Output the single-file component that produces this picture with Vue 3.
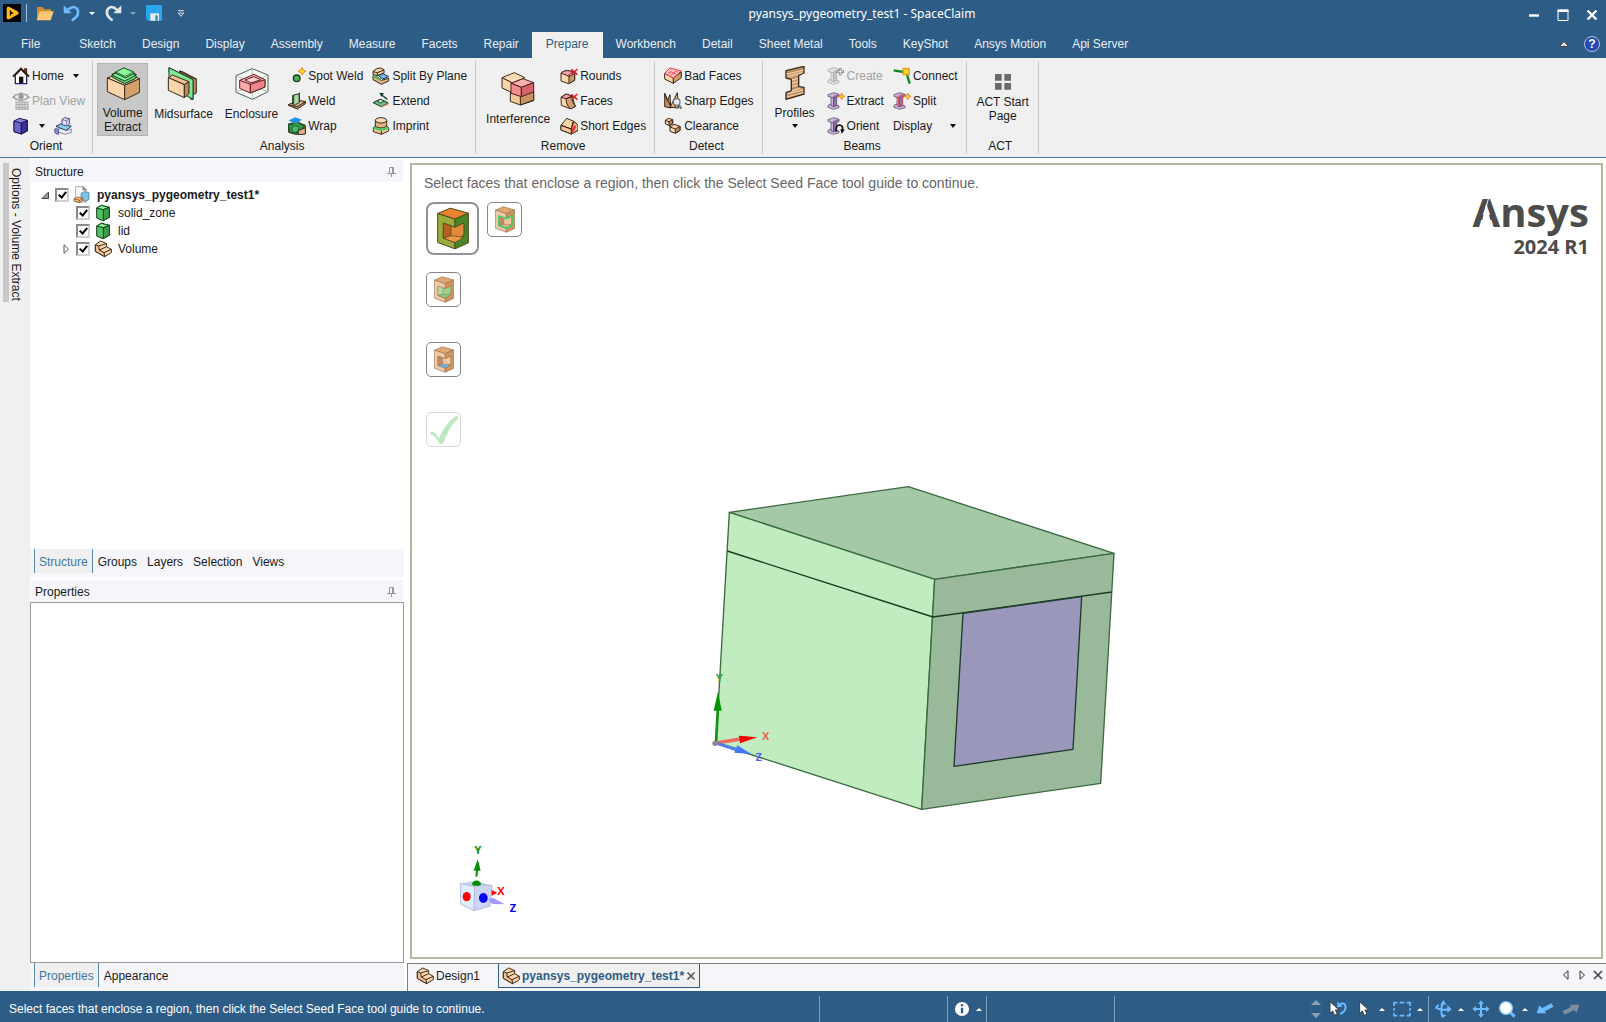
<template>
  <div class="app">
    <header class="title-bar">
      <div class="quick-access">
        <svg class="logo" viewBox="0 0 54 54" v-html="icons.logo"></svg>
        <span class="quick-sep"></span>
        <button v-for="q in quickItems" :key="q.name" class="quick-btn" :aria-label="q.name">
          <svg viewBox="0 0 54 54" v-html="icons[q.icon]"></svg>
          <i v-if="q.caret" class="caret" :class="q.caret"></i>
        </button>
      </div>
      <h1 class="title">pyansys_pygeometry_test1 - SpaceClaim</h1>
      <div class="window-btns">
        <button aria-label="Minimize"><svg viewBox="0 0 12 12"><path d="M1 6.5h10" stroke="#fff" stroke-width="2.4" /></svg></button>
        <button aria-label="Maximize"><svg viewBox="0 0 12 12"><path d="M1 11.5V1h10v10.5z" fill="none" stroke="#fff" /><path d="M.5 1.8h11" stroke="#fff" stroke-width="2.4" /></svg></button>
        <button aria-label="Close"><svg viewBox="0 0 12 12"><path d="M1.5 1.5l9 9M10.5 1.5l-9 9" stroke="#fff" stroke-width="2.4" /></svg></button>
      </div>
    </header>

    <nav class="menu">
      <button class="file-btn">File</button>
      <button
        v-for="tab in tabs"
        :key="tab"
        class="menu-tab"
        :class="{ active: tab === activeTab }"
        @click="activeTab = tab"
      >{{ tab }}</button>
      <div class="menu-end">
        <button aria-label="Collapse ribbon"><svg viewBox="0 0 12 12"><path d="M1.5 8.5L6 3.5l4.5 5z" fill="#eee" stroke="#444" /><path d="M5 8.5l1-1.5 1 1.5z" fill="#444" /></svg></button>
        <button class="help" aria-label="Help">?</button>
      </div>
    </nav>

    <section class="ribbon">
      <div class="group orient">
        <div class="group-body">
          <div class="column">
            <button class="small-btn"><svg viewBox="0 0 54 54" v-html="icons.home"></svg>Home<i class="caret dark wide"></i></button>
            <button class="small-btn" disabled><svg viewBox="0 0 54 54" v-html="icons.planView"></svg>Plan View</button>
            <div class="split-row">
              <button class="small-btn" aria-label="View"><svg viewBox="0 0 54 54" v-html="icons.viewCube"></svg><i class="caret dark wide"></i></button>
              <button class="small-btn" aria-label="Snap view"><svg viewBox="0 0 54 54" v-html="icons.snapView"></svg></button>
            </div>
          </div>
        </div>
        <div class="group-label">Orient</div>
      </div>

      <div v-for="group in groups" :key="group.name" class="group">
        <div class="group-body">
          <button
            v-for="b in group.big"
            :key="b.label"
            class="big-btn"
            :class="[b.cls, { pressed: b.pressed }]"
          >
            <svg viewBox="0 0 102 102" v-html="icons[b.icon]"></svg>
            <span class="big-label">{{ b.label }}</span>
            <i v-if="b.caret" class="caret dark"></i>
          </button>
          <div v-for="(col, i) in group.columns" :key="i" class="column">
            <button v-for="s in col" :key="s.label" class="small-btn" :disabled="s.disabled">
              <svg v-if="s.icon" viewBox="0 0 54 54" v-html="icons[s.icon]"></svg>{{ s.label }}
              <i v-if="s.caret" class="caret dark end"></i>
            </button>
          </div>
        </div>
        <div class="group-label">{{ group.name }}</div>
      </div>
    </section>

    <main class="workspace">
      <aside class="dock">
        <button class="dock-tab">Options - Volume Extract</button>
      </aside>

      <div class="panels">
        <section class="panel">
          <div class="panel-head">Structure<svg class="pin" viewBox="0 0 9 10" v-html="icons.pin"></svg></div>
          <ul class="tree">
            <li v-for="node in nodes" :key="node.name" class="node" :class="{ root: node.root }">
              <svg class="twisty" viewBox="0 0 9 10">
                <path v-if="node.root" d="M1 8.5L7.5 2v6.5z" fill="#999" stroke="#444" />
                <path v-else-if="node.closed" d="M2 .8L6.5 5 2 9.2z" fill="#fff" stroke="#555" />
              </svg>
              <label>
                <input v-model="node.checked" type="checkbox">
                <svg class="node-icon" viewBox="0 0 54 54" v-html="icons[node.icon]"></svg>
                <span>{{ node.name }}</span>
              </label>
            </li>
          </ul>
          <div class="panel-tabs">
            <button
              v-for="t in structureTabs"
              :key="t"
              :class="{ active: t === structureTab }"
              @click="structureTab = t"
            >{{ t }}</button>
          </div>
        </section>
        <section class="panel">
          <div class="panel-head">Properties<svg class="pin" viewBox="0 0 9 10" v-html="icons.pin"></svg></div>
          <div class="props-box"></div>
          <div class="panel-tabs">
            <button
              v-for="t in propertyTabs"
              :key="t"
              :class="{ active: t === propertyTab }"
              @click="propertyTab = t"
            >{{ t }}</button>
          </div>
        </section>
      </div>

      <div class="documents">
        <div class="viewport">
          <p class="hint">{{ message }}</p>
          <div class="guides">
            <div class="guide-row">
              <button class="guide large" aria-label="Select Faces"><svg viewBox="0 0 96 128" v-html="guideIcons.faces"></svg></button>
              <button class="guide" aria-label="Select Edges"><svg viewBox="0 0 96 128" v-html="guideIcons.edges"></svg></button>
            </div>
            <div class="guide-row"><button class="guide" aria-label="Select Seed Face"><svg viewBox="0 0 96 128" v-html="guideIcons.seed"></svg></button></div>
            <div class="guide-row"><button class="guide" aria-label="Select Cap Face"><svg viewBox="0 0 96 128" v-html="guideIcons.cap"></svg></button></div>
            <div class="guide-row">
              <button class="guide complete" aria-label="Complete" disabled>
                <svg viewBox="0 0 84 84">
                  <path d="M0 50Q8 46 14 50Q22 58 27 67Q44 22 78 0Q86 0 84 8Q56 34 40 80Q32 88 27 81Q18 60 0 54z" fill="#bde8c0" />
                </svg>
              </button>
            </div>
          </div>

          <svg class="brand" viewBox="0 0 130 80">
            <text x="130" y="42" text-anchor="end" class="brand-name">Ansys</text>
            <path d="M27 21l-6 22h13z" fill="#fff" />
            <path d="M30 12l-3 10" stroke="#fff" />
            <text x="130" y="69" text-anchor="end" class="brand-release">2024 R1</text>
          </svg>

          <svg class="model" viewBox="0 0 1320 1050">
            <g stroke="#3a6b40" stroke-width="4" stroke-linejoin="round">
              <polygon points="118,127 655,50 1272,250 734,328" fill="#a5c9a6" />
              <polygon points="118,127 734,328 695,1018 78,820" fill="#c0ecc0" />
              <polygon points="734,328 1272,250 1232,940 695,1018" fill="#9ab99a" />
              <path d="M112 243L729 441L1265 366" fill="none" stroke="#163d1c" />
              <polygon points="819,430 1175,380 1149,838 792,889" fill="#9998ba" stroke="#1f3a2c" />
            </g>
            <path d="M78 819L84 710" stroke="#149014" stroke-width="8" />
            <path d="M71 722L84 665L95 722z" fill="#009400" />
            <path d="M78 819L152 807" stroke="#f0685e" stroke-width="10" />
            <path d="M147 797L202 802L150 820z" fill="#f20000" />
            <path d="M78 819L140 839" stroke="#5580e0" stroke-width="10" />
            <path d="M142 826L184 852L133 848z" fill="#4477ff" />
            <circle cx="75" cy="820" r="8" fill="#888" />
            <text x="88" y="636" fill="#35a035">Y</text>
            <text x="227" y="810" fill="#f0655c">X</text>
            <text x="206" y="873" fill="#5560f5">Z</text>
          </svg>

          <svg class="compass" viewBox="0 -30 180 240">
            <path d="M2 118L44 110L96 124L54 130z" fill="#c9d3ee" />
            <path d="M2 118L54 130L42 200L2 180z" fill="#dfeefb" stroke="#b3b9dc" stroke-width="3" />
            <path d="M44 122L96 124L90 186L42 200z" fill="#ccd6f2" stroke="#b3b9dc" stroke-width="3" />
            <path d="M36 122a13 12 0 0 1 27 0q-13 8-27 0z" fill="#008f00" />
            <path d="M49 98L52 76" stroke="#008f00" stroke-width="6" />
            <path d="M41 80L53 46L62 80z" fill="#008f00" />
            <ellipse cx="20" cy="158" rx="12" ry="14" fill="#f00" />
            <ellipse cx="70" cy="162" rx="13" ry="15" fill="#00f" />
            <path d="M95 138L112 146L95 155z" fill="#f00" />
            <path d="M88 164L100 162L134 181L98 180L88 174z" fill="#a09cff" />
            <text x="54" y="31" fill="#008f00">Y</text>
            <text x="123" y="154" fill="#f00">X</text>
            <text x="159" y="203" fill="#00f">Z</text>
          </svg>
        </div>

        <div class="doc-tabs">
          <button class="doc-tab"><svg viewBox="0 0 54 54" v-html="icons.component"></svg>Design1</button>
          <div class="doc-tab active">
            <button><svg viewBox="0 0 54 54" v-html="icons.component"></svg>pyansys_pygeometry_test1*</button>
            <button class="close" aria-label="Close document"><svg viewBox="0 0 10 10"><path d="M1.5 1.5l7 7M8.5 1.5l-7 7" stroke="#555" stroke-width="1.6" /></svg></button>
          </div>
          <div class="doc-nav">
            <button aria-label="Previous"><svg viewBox="0 0 10 10"><path d="M7 .8L2.5 5 7 9.2z" fill="none" stroke="#333" /></svg></button>
            <button aria-label="Next"><svg viewBox="0 0 10 10"><path d="M3 .8L7.5 5 3 9.2z" fill="none" stroke="#333" /></svg></button>
            <button aria-label="Close"><svg viewBox="0 0 10 10"><path d="M1 1l8 8M9 1L1 9" stroke="#444" stroke-width="1.6" /></svg></button>
          </div>
        </div>
      </div>
    </main>

    <footer class="status-bar">
      <span class="status-msg">{{ message }}</span>
      <span class="cell medium"></span>
      <span class="cell info">
        <button aria-label="Messages"><svg viewBox="0 0 54 54"><circle cx="27" cy="27" r="21" fill="#fff" /><path d="M27 23v17M27 13v6" stroke="#2d5c86" stroke-width="7" /></svg></button>
        <i class="caret up"></i>
      </span>
      <span class="cell medium"></span>
      <span class="cell tools">
        <span class="spinner"><i class="caret up faded"></i><i class="caret faded down"></i></span>
        <button v-for="t in selectTools" :key="t.name" :aria-label="t.name">
          <svg viewBox="0 0 54 54" v-html="icons[t.icon]"></svg><i v-if="t.caret" class="caret up"></i>
        </button>
      </span>
      <span class="cell tools view">
        <button v-for="t in viewTools" :key="t.name" :aria-label="t.name">
          <svg viewBox="0 0 54 54" v-html="icons[t.icon]"></svg><i v-if="t.caret" class="caret up"></i>
        </button>
      </span>
    </footer>
  </div>
</template>

<script setup>
import { ref } from 'vue'

const message = 'Select faces that enclose a region, then click the Select Seed Face tool guide to continue.'

const tabs = [
  'Sketch', 'Design', 'Display', 'Assembly', 'Measure', 'Facets', 'Repair', 'Prepare',
  'Workbench', 'Detail', 'Sheet Metal', 'Tools', 'KeyShot', 'Ansys Motion', 'Api Server'
]
const activeTab = ref('Prepare')

const structureTabs = ['Structure', 'Groups', 'Layers', 'Selection', 'Views']
const structureTab = ref('Structure')
const propertyTabs = ['Properties', 'Appearance']
const propertyTab = ref('Properties')

const quickItems = [
  { name: 'Open', icon: 'open' },
  { name: 'Undo', icon: 'undo', caret: 'light' },
  { name: 'Redo', icon: 'redo', caret: 'faded' },
  { name: 'Save', icon: 'save' },
  { name: 'Customize', icon: 'customize' }
]

const groups = [
  {
    name: 'Analysis',
    big: [
      { label: 'Volume Extract', icon: 'volume', pressed: true, cls: 'two-line' },
      { label: 'Midsurface', icon: 'midsurface' },
      { label: 'Enclosure', icon: 'enclosure' }
    ],
    columns: [
      [
        { label: 'Spot Weld', icon: 'spotWeld' },
        { label: 'Weld', icon: 'weld' },
        { label: 'Wrap', icon: 'wrap' }
      ],
      [
        { label: 'Split By Plane', icon: 'splitPlane' },
        { label: 'Extend', icon: 'extend' },
        { label: 'Imprint', icon: 'imprint' }
      ]
    ]
  },
  {
    name: 'Remove',
    big: [{ label: 'Interference', icon: 'interference', cls: 'low' }],
    columns: [[
      { label: 'Rounds', icon: 'rounds' },
      { label: 'Faces', icon: 'faces' },
      { label: 'Short Edges', icon: 'shortEdges' }
    ]]
  },
  {
    name: 'Detect',
    columns: [[
      { label: 'Bad Faces', icon: 'badFaces' },
      { label: 'Sharp Edges', icon: 'sharpEdges' },
      { label: 'Clearance', icon: 'clearance' }
    ]]
  },
  {
    name: 'Beams',
    big: [{ label: 'Profiles', icon: 'profiles', caret: true, cls: 'roomy' }],
    columns: [
      [
        { label: 'Create', icon: 'beamCreate', disabled: true },
        { label: 'Extract', icon: 'beamExtract' },
        { label: 'Orient', icon: 'beamOrient' }
      ],
      [
        { label: 'Connect', icon: 'connect' },
        { label: 'Split', icon: 'beamSplit' },
        { label: 'Display', caret: true }
      ]
    ]
  },
  { name: 'ACT', big: [{ label: 'ACT Start Page', icon: 'act', cls: 'act' }] }
]

const nodes = ref([
  { name: 'pyansys_pygeometry_test1*', icon: 'design', checked: true, root: true },
  { name: 'solid_zone', icon: 'solid', checked: true },
  { name: 'lid', icon: 'solid', checked: true },
  { name: 'Volume', icon: 'component', checked: true, closed: true }
])

const selectTools = [
  { name: 'Revert selection', icon: 'revert' },
  { name: 'Select', icon: 'cursor', caret: true },
  { name: 'Box select', icon: 'boxSelect', caret: true }
]
const viewTools = [
  { name: 'Spin', icon: 'spin', caret: true },
  { name: 'Pan', icon: 'pan' },
  { name: 'Zoom', icon: 'zoom', caret: true },
  { name: 'Previous view', icon: 'prevView' },
  { name: 'Next view', icon: 'nextView' }
]

const shape = (d, fill, stroke = '#3a2a1c', width = 3) =>
  `<path d="${d}" fill="${fill}" stroke="${stroke}" stroke-width="${width}" stroke-linejoin="round"/>`
const line = (d, stroke, width = 3) =>
  `<path d="${d}" fill="none" stroke="${stroke}" stroke-width="${width}"/>`

const redX = line('M34 7L52 23M52 6L34 24', '#e8202c', 5)
const star = shape('M44 3L47 10L53 13L47 16L44 23L41 16L34 13L41 10z', '#ffd21a', '#f08020', 3)

const beam = (light, dark, edge) =>
  shape('M3 40L14 35L36 42V47L20 52L3 46z', light, edge, 2) +
  shape('M12 14L20 17V44L12 41z', light, edge, 2) + shape('M20 17L29 14V41L20 44z', dark, edge, 2) +
  shape('M3 8L20 2L36 7V13L20 18L3 13z', light, edge, 2) + shape('M20 13L36 7V13L20 18z', dark, edge, 1)

const pointer = (x) =>
  `<path d="M${x} 5v35l8-7 6 13 8-4-6-12h11z" fill="#fff" stroke="#3d3d3d" stroke-width="3"/>`

const arrow = (color) =>
  `<path d="M2 40L10 16L18 24L46 10L53 20L26 34L32 40z" fill="${color}"/>`

const icons = {
  logo: '<path d="M0 0h54v54H0z" fill="#000"/><path d="M16 13L42 27L16 41z" fill="none" stroke="#ffb71b" stroke-width="10" stroke-linejoin="round"/><path d="M22 19v16" stroke="#000" stroke-width="3"/>',
  open: '<path d="M3 48V9h17l5 7h20v32z" fill="#d58a2a"/><path d="M2 49L11 22h42l-9 27z" fill="#fcc679"/>',
  undo: '<path d="M14 18Q34 0 44 18Q50 36 26 49" fill="none" stroke="#6cbaff" stroke-width="8"/><path d="M2 4v24h24z" fill="#6cbaff"/>',
  redo: '<path d="M40 18Q20 0 10 18Q4 36 26 49" fill="none" stroke="#e4e4e4" stroke-width="8"/><path d="M52 4v24H28z" fill="#e4e4e4"/>',
  save: '<path d="M3 3h48v47H9L3 44z" fill="#2aa6ea"/><path d="M16 28h26v22H16z" fill="#e9eef2"/><path d="M31 34h7v16h-7z" fill="#2a86c0"/>',
  customize: '<path d="M18 20h18" stroke="#ddd" stroke-width="3"/><path d="M19 27h16L27 37z" fill="#2d5c86" stroke="#ddd" stroke-width="3"/>',
  home: shape('M10 24V50H44V24L27 7z', '#fff', '#2a2470', 4) + shape('M38 5h6v14l-6-5z', '#8a4a1c', '#4a1c14') +
    line('M3 29L27 5L51 29', '#2f2208', 6) + '<path d="M21 29h13v19H21z" fill="#111"/>',
  planView: line('M3 16Q27 -6 51 16Q27 34 3 16z', '#999', 4) + '<circle cx="27" cy="14" r="8" fill="#999"/>' +
    line('M6 6L12 11M27 0V4M48 6L42 11M9 24L14 20M27 29V24', '#aaa', 3) +
    '<path d="M11 29h38v24H11z" fill="#ddd"/>' + line('M11 30H49M11 38H49M11 46H49M11 52H49M12 29V53M21 29V53M30 29V53M39 29V53M48 29V53', '#999', 2),
  viewCube: shape('M6 12L22 4L46 10L46 42L28 51L6 44z', '#8c84e8', '#1b1850') + shape('M6 12L28 18V51L6 44z', '#6d64cc', '#1b1850') + shape('M28 18L46 10V42L28 51z', '#39329a', '#1b1850'),
  snapView: shape('M4 40L16 46L34 52L52 46V36L40 40L20 34z', '#e9eef4', '#5a5a78', 2) + shape('M2 36Q8 30 14 38V52Q4 52 2 46z', '#8c8ad0', '#3c3a78', 2) +
    shape('M6 28L22 20L52 28L36 40z', '#8fd0ea', '#1f3f5c') + shape('M24 8L32 2L46 5V22L40 27L24 23z', '#e6e2ff', '#4a4690') + line('M24 8L38 11L46 5M38 11V26', '#4a4690', 2),
  volume: shape('M4 33L52 16L101 35L56 55z', '#fcd5aa') + shape('M4 33L56 55V98L4 74z', '#fcd5aa') + shape('M56 55L101 35V76L56 98z', '#d3a06c') +
    shape('M18 30L18 22L53 4L90 22V30L88 35L56 50z', '#5fcf74', '#173f1d') + shape('M18 24L53 6L90 24L56 42z', '#8cf79c', '#173f1d') + shape('M29 19V15L53 3L83 15V20L58 33z', '#6edf80', '#173f1d') + shape('M29 15L53 3L83 15L58 28z', '#8cf79c', '#173f1d', 2),
  midsurface: shape('M40 12L88 36V78L75 84L40 60z', '#b88d60') + shape('M36 12L76 32L88 36L48 15z', '#d6aa7c') +
    shape('M6 2L78 38V98L70 96V46L6 16z', '#7ee898', '#174522') + shape('M6 2L78 38V96L6 60z', '#7ee898', '#174522') +
    shape('M4 32L16 24L66 44L52 53z', '#e8bf90') + shape('M4 32L52 53V92L4 70z', '#fcd5aa') + shape('M52 53L66 44V80L52 92z', '#b98a5c'),
  enclosure: shape('M3 26L52 5L99 24V74L53 97L3 76z', '#f6f8f6', '#4d6650') + line('M3 26L53 46L99 24M53 46V97M3 76L52 58L99 74M52 5V30', '#93aa96', 2) +
    shape('M14 40L57 22L90 38V60L46 78L14 64z', '#ffaaac', '#5b2326') + shape('M46 52L90 38V60L46 78z', '#ee868c', '#5b2326') + shape('M30 39L56 29L78 38L48 48z', '#ffd0d0', '#5b2326') + line('M14 40L46 52V78', '#5b2326'),
  spotWeld: '<circle cx="26" cy="34" r="10" fill="#4faa59" stroke="#183d1c" stroke-width="4"/>' + shape('M42 2L46 9L53 13L46 17L42 24L38 17L31 13L38 9z', '#ffdf26', '#f07b20', 3),
  weld: shape('M1 40L14 33L52 28V35L28 51z', '#ad825a') + shape('M1 38L28 44L52 29L33 25z', '#dfb28a') + shape('M14 10L34 5V31L20 40L14 36z', '#a9d6a4', '#223a20') + line('M34 2V30M17 10V38', '#3a2a1c', 3),
  wrap: shape('M2 22L24 14L52 25V50L22 52L2 46z', '#a8744a') + shape('M2 20Q20 26 20 14L32 14Q34 26 50 24L40 42Q22 54 4 44z', '#2f9c48', '#0d4c1d') +
    '<circle cx="22" cy="36" r="10" fill="#50b867" stroke="#0d4c1d" stroke-width="2"/><path d="M2 10L22 1L42 8L30 16L16 19z" fill="#2293e6"/>' + shape('M30 42L52 32V51L32 53z', '#e1b48b'),
  splitPlane: shape('M3 13L14 5L26 3L36 8V18L16 26L3 22z', '#f8cfa2') + shape('M3 26L16 31L28 40L50 34V42L28 52L3 38z', '#e1b384') + line('M2 26L26 38', '#36b455', 6) +
    shape('M18 25L34 20L50 29L32 36z', '#7eb4e6', '#1c3858') + line('M3 14L16 17L36 9M16 17V26', '#3a2a1c', 3),
  extend: line('M46 22L28 8', '#163d22', 4) + '<path d="M22 2L36 4L28 15z" fill="#163d22"/>' + shape('M3 32L24 22L48 32L28 44z', '#6fc087', '#173f24') + shape('M16 27L25 22L37 27L26 33z', '#d9f1dc', '#173f24') + line('M28 44L50 34', '#a98058', 5),
  imprint: shape('M4 32L14 24H42L50 32V42L28 52L4 44z', '#f0c698') + shape('M10 10V28Q26 38 44 28V10z', '#e0b284') + '<ellipse cx="27" cy="10" rx="17" ry="8" fill="#ffdbb4" stroke="#3a2a1c" stroke-width="3"/>' +
    line('M5 31Q27 46 49 31', '#3bd060', 6) + line('M28 42V52', '#3a2a1c'),
  interference: shape('M3 17L40 2L72 17L34 33z', '#fcdcb4') + shape('M3 17L34 33V62L3 48z', '#fcd5aa') + shape('M28 62L60 50L98 62V86L58 99L28 88z', '#f4c898') + shape('M58 74L98 58V84L58 99z', '#c99464') +
    shape('M30 34L66 20L98 32L61 46z', '#f7b0ae', '#4c1f20') + shape('M30 34L61 46V74L30 64z', '#f58c90', '#4c1f20') + shape('M61 46L98 32V60L61 74z', '#d5636c', '#4c1f20'),
  rounds: shape('M3 18L20 10L44 16V40L26 50L3 42z', '#fcd5aa') + shape('M3 18Q14 8 32 12L44 16Q28 16 27 28z', '#f6a2a8', '#4c2020') + shape('M27 28L44 20V40L27 50z', '#c79a6c') + redX,
  faces: shape('M3 16L18 6L36 12L46 44L30 50L4 40z', '#fcd5aa') + shape('M18 20L36 14Q36 34 47 42L32 51Q18 40 18 20z', '#d1a071') + shape('M3 16L18 6L36 12L18 20z', '#f6a2a8', '#4c2020') + redX,
  shortEdges: shape('M3 25L20 4L42 13L54 25V40L34 51L3 39z', '#fcd5aa') + shape('M3 25L34 36V51L3 39z', '#f4c898') + shape('M34 36L42 13L54 25V40L34 51z', '#eeb58c') + line('M3 25L34 36L38 15', '#3a2a1c') + line('M36 44L46 26', '#f01a24', 6),
  badFaces: shape('M2 19L28 33V49L2 36z', '#fcd5aa') + shape('M28 33L52 15V32L28 49z', '#d3a06c') + shape('M2 19L18 3L52 12L28 33z', '#ffc7c4', '#ee3340') + line('M12 19Q22 10 28 18Q34 12 40 14M20 25Q26 18 34 20', '#ee4350', 3),
  sharpEdges: shape('M2 4L10 26L18 8L20 48L2 44z', '#be8d60') + shape('M18 46L40 2L44 48z', '#d9aa7c') + line('M30 22L34 46M2 4L22 48', '#3a2a1c') + '<circle cx="38" cy="30" r="10" fill="#dcecf8" stroke="#777" stroke-width="4"/>' + line('M45 38L52 50', '#777', 6),
  clearance: shape('M4 10L14 4L26 8V20L15 26L4 20z', '#fcd5aa') + shape('M15 14L26 8V20L15 26z', '#b98a5c') + line('M4 10L15 14', '#3a2a1c') +
    shape('M18 30L30 22L48 28V40L34 49L18 43z', '#fcd5aa') + shape('M34 36L48 28V40L34 49z', '#b98a5c') + line('M18 30L34 36', '#3a2a1c') + line('M16 30L20 26', '#555', 4),
  profiles: shape('M24 14L78 1V21L62 28V62L78 64V84L24 100V80L40 74V40L24 36z', '#cf9e70', '#3a2a1c', 4) +
    line('M26 24L76 12M28 32L74 20M42 42L60 37M42 52L60 47M42 62L60 57M40 76L66 66M28 84L76 72M28 92L76 80', '#f6d6b4', 3) + line('M28 20L76 8M44 36L60 32M42 68L60 63M30 88L76 76', '#9a6d44', 2),
  beamCreate: beam('#e2e2e2', '#c8c8c8', '#a0a0a0') + line('M40 3V25M29 14H51', '#8a8a8a', 8) + line('M40 6V22M32 14H48', '#e6e6e6', 3),
  beamExtract: beam('#cdb4dc', '#9678aa', '#4a3656') + star,
  beamOrient: beam('#cdb4dc', '#9678aa', '#4a3656') + line('M28 44Q24 24 38 24Q50 26 46 42', '#111', 5) + '<path d="M40 36L53 38L44 50z" fill="#111"/>',
  beamSplit: beam('#cdb4dc', '#9678aa', '#4a3656') + line('M17 12L27 8V36L17 42z', '#f0505a', 3) + star,
  connect: line('M2 10L32 15', '#0e8a22', 7) + line('M42 22L50 50', '#0e8a22', 7) + '<path d="M31 5h17v17H31z" fill="#ffe22a" stroke="#f2a01c" stroke-width="5"/>',
  act: '<path d="M27 27h20v20H27zM55 27h20v20H55zM27 54h20v20H27zM55 54h20v20H55z" fill="#6a6a6a"/>',
  pin: '<path d="M2.5 6V.5h4V6M0 6.500h9M4.5 6.500V10M5.500 1v5" fill="none" stroke="#999"/>',
  solid: shape('M8 12L22 4L46 10V40L26 50L8 42z', '#52c062', '#14401b') + shape('M8 12L22 4L46 10L28 17z', '#8ae897', '#14401b') + shape('M28 17L46 10V40L28 50z', '#3a9c4a', '#14401b'),
  component: shape('M4 14L20 3L38 11V20L52 28V38L32 50L4 34z', '#fcd5aa') + shape('M4 14L14 18L16 30L30 38L32 50L4 34z', '#f1bf92') +
    line('M14 18L38 11M16 30L38 20M30 38L52 28', '#3a2a1c', 3),
  design: shape('M8 2H30L40 12V48H8z', '#fff', '#808890', 2) + shape('M30 2V12H40z', '#ddd', '#333', 2) + shape('M24 22L34 17L48 20V40L38 46L24 40z', '#7fc4e4', '#2b6c90', 2) + shape('M3 38L14 33L30 37V43L20 50L3 45z', '#f4bd8a', '#6b3c18', 2) + line('M3 38L20 43L30 37M20 43V50', '#6b3c18', 2),
  cursor: pointer(14),
  revert: pointer(3) + '<path d="M32 14Q48 4 50 22Q50 34 34 42" fill="none" stroke="#6cbaff" stroke-width="6"/><path d="M25 4v18l16-2z" fill="#6cbaff"/>',
  boxSelect: '<path d="M3 18V8h10M20 8h14M41 8h10v10M51 24v8M51 38v9H41M34 47H20M13 47H3V38M3 32v-8" fill="none" stroke="#6cbaff" stroke-width="5"/>',
  spin: line('M4 22Q24 34 46 27M27 8Q18 28 25 50', '#6cbaff', 6) + line('M6 22L14 15', '#6cbaff', 5) + '<path d="M18 14L29 0L37 14zM22 42L24 54L38 46zM40 15L53 28L40 38z" fill="#6cbaff"/>',
  pan: line('M27 6V48M6 27H48', '#6cbaff', 6) + '<path d="M27 1L36 12H18zM27 53L36 42H18zM1 27L12 18V36zM53 27L42 18V36z" fill="#6cbaff"/>',
  zoom: line('M34 34L50 50', '#6cbaff', 9) + '<circle cx="24" cy="24" r="19" fill="#fff" stroke="#8cc8ff" stroke-width="4"/>',
  prevView: arrow('#6cbaff'),
  nextView: `<g transform="rotate(180 27 27)">${arrow('#7d8f9d')}</g>`
}

// block with a notched pocket, shared by all tool guides
const guide = (c, extra = '') =>
  shape('M2 19L40 3L94 18L54 36z', c.top, c.edge) +
  shape('M2 19L54 36V125L2 106z', c.left, c.edge) +
  shape('M54 36L94 18V107L54 125z', c.right, c.edge) +
  shape('M19 48L54 60L81 47V82L54 106L19 93z', c.pocket, c.edge) +
  shape('M19 48L42 56V86L19 93z', c.wall, c.edge, 2) +
  shape('M42 86L81 90L54 106L19 93z', c.floor, c.edge, 2) + extra

const tan = { top: '#e0a870', left: '#efc9a8', right: '#d0925f', pocket: '#efc5a2', wall: '#c28a60', floor: '#e0b08a', edge: '#98704e' }

const guideIcons = {
  faces: guide({ top: '#e8822e', left: '#9bab3e', right: '#47872a', pocket: '#e08a3c', wall: '#b8611c', floor: '#f09848', edge: '#4c4a16' }),
  edges: guide(tan, line('M19 48L54 60L81 47V92L54 106L19 93z', '#17c544', 7) + line('M19 48L54 60L81 47V92L54 106L19 93z', '#a5f5b0', 2)),
  seed: guide({ ...tan, pocket: '#98d48c', wall: '#b6dca0', floor: '#80c878' }),
  cap: guide({ ...tan, floor: '#62b4e0' })
}
</script>

<style>
body {
  margin: 0;
}
</style>

<style scoped>
.app {
  display: flex;
  flex-direction: column;
  min-height: 100vh;
  font-family: "Liberation Sans", Arial, sans-serif;
  font-size: 12px;
  color: #1a1a1a;
  background: #fff;
}

button {
  font: inherit;
  color: inherit;
  background: none;
  border: 0;
  padding: 0;
  margin: 0;
  white-space: nowrap;
}

svg {
  display: block;
  flex: none;
}

.caret {
  flex: none;
  border: 3px solid transparent;
  border-top-color: currentColor;
  border-bottom: 0;
}

.caret.up {
  border-top: 0;
  border-bottom: 3px solid #fff;
}

.caret.dark {
  border-width: 4px 3px 0;
  color: #111;
}

.caret.wide {
  margin-left: 7px;
}

.caret.end {
  margin-left: auto;
  margin-right: 2px;
}

.caret.faded {
  color: #8a9fb0;
  border-bottom-color: #8a9fb0;
}

/* title bar */
.title-bar {
  display: flex;
  align-items: center;
  height: 28px;
  color: #fff;
  background: #2d5c86;
}

.quick-access {
  display: flex;
  align-items: center;
  gap: 9px;
  padding: 0 6px 2px 3px;
}

.quick-access svg {
  width: 18px;
  height: 18px;
}

.quick-sep {
  width: 1px;
  height: 18px;
  margin-left: -4px;
  background: #a9bdd0;
}

.quick-btn {
  display: flex;
  align-items: center;
  gap: 8px;
}

.title {
  flex: 1;
  margin: 0;
  font-family: "Noto Sans", "Open Sans", sans-serif;
  font-size: 12px;
  font-weight: 400;
  line-height: 18px;
  text-align: center;
}

.window-btns {
  display: flex;
  justify-content: flex-end;
  gap: 17px;
  padding: 2px 8px 0 0;
}

.window-btns svg,
.menu-end svg {
  width: 12px;
  height: 12px;
}

/* ribbon tabs */
.menu {
  display: flex;
  height: 30px;
  padding-left: 21px;
  color: #e8eef4;
  background: #2d5c86;
}

.file-btn {
  margin-right: 26px;
}

.menu-tab {
  margin-top: 4px;
  padding: 0 13px 2px;
}

.file-btn {
  padding-top: 2px;
}

.menu-tab.active {
  padding: 0 14px 2px;
  color: #2d5c86;
  background: #f0f0f0;
}

.menu-end {
  display: flex;
  align-items: center;
  gap: 14px;
  margin-left: auto;
  padding: 2px 6px 0 0;
}

.help {
  width: 16px;
  height: 16px;
  border: 1px solid #b9c4dc;
  border-radius: 50%;
  font-weight: 700;
  line-height: 14px;
  color: #fff;
  background: #2348b4;
}

/* ribbon */
.ribbon {
  display: flex;
  height: 99px;
  background: #f0f0f0;
  border-bottom: 1px solid #4a76a0;
}

.group {
  display: flex;
  flex-direction: column;
  margin: 3px 0;
  padding: 0 8px 0 4px;
  border-right: 1px solid #c9c9c9;
}

.group.orient {
  padding-left: 7px;
  padding-right: 7px;
}

.group-body {
  display: flex;
  flex: 1;
  padding-top: 2px;
}

.group-label {
  line-height: 16px;
  text-align: center;
}

.column {
  display: flex;
  flex-direction: column;
  margin-left: 4px;
}

.column:first-child {
  margin-left: 5px;
}

.column + .column {
  margin-left: 9px;
}

.small-btn {
  display: flex;
  align-items: center;
  gap: 2px;
  height: 25px;
}

.small-btn:disabled {
  color: #a3a3a3;
}

.small-btn svg {
  width: 18px;
  height: 18px;
}

.split-row {
  display: flex;
  gap: 9px;
}

.big-btn {
  display: flex;
  flex-direction: column;
  align-items: center;
  height: 73px;
  padding: 4px 6px 0;
}

.big-btn svg {
  width: 34px;
  height: 34px;
}

.big-label {
  margin-top: 6px;
  line-height: 14px;
  white-space: normal;
}

.two-line {
  padding: 4px 5px 0;
}

.two-line .big-label {
  width: 41px;
  margin-top: 5px;
}

.pressed {
  background: #c8c8c8;
  outline: 1px solid #b4b4b4;
  outline-offset: -1px;
}

.low {
  padding-top: 9px;
}

.roomy {
  padding: 3px 8px 0;
}

.roomy .caret {
  margin-top: 4px;
}

.act {
  padding: 2px 0 0 5px;
}

.act .big-label {
  width: 54px;
  margin-top: -4px;
}

/* workspace */
.workspace {
  display: flex;
  flex: 1;
}

.dock {
  width: 30px;
  padding-top: 5px;
  box-sizing: border-box;
  background: #f0f0f0;
}

.dock-tab {
  margin-left: 3px;
  padding: 5px 0 1px;
  border-left: 6px solid #c8c8c8;
  writing-mode: vertical-rl;
  line-height: 14px;
}

.panels {
  display: grid;
  grid-template-rows: 417fr 411fr;
  gap: 3px;
  width: 374px;
  padding-top: 2px;
}

.panel {
  display: flex;
  flex-direction: column;
}

.panel-head {
  display: flex;
  align-items: center;
  justify-content: space-between;
  box-sizing: border-box;
  height: 22px;
  margin: 0 1px;
  padding: 2px 7px 0 4px;
  background: #f5f5fa;
}

.pin {
  width: 9px;
  height: 10px;
}

.tree {
  flex: 1;
  margin: 0;
  padding: 4px 0 0 32px;
  list-style: none;
}

.node {
  display: flex;
  align-items: center;
  gap: 5px;
  height: 18px;
}

.node.root {
  margin-left: -21px;
  font-weight: 700;
}

.twisty {
  width: 9px;
  height: 10px;
}

.node label {
  display: flex;
  align-items: center;
  gap: 4px;
}

.node-icon {
  width: 18px;
  height: 18px;
}

.node label span {
  margin-left: 2px;
}

.node input {
  appearance: none;
  position: relative;
  width: 14px;
  height: 14px;
  margin: 0;
  border: 2px solid;
  border-color: #8a8a8a #d0d0d0 #d0d0d0 #8a8a8a;
  background: #fff;
}

.node input:checked::after {
  content: "";
  position: absolute;
  left: 3px;
  top: 0;
  width: 3px;
  height: 6px;
  border: solid #000;
  border-width: 0 2px 2px 0;
  transform: rotate(40deg);
}

.panel-tabs {
  display: flex;
  height: 28px;
  padding-left: 4px;
  background: #f5f5fa;
}

.panel-tabs button {
  height: 24px;
  padding: 2px 5px 0;
}

.panel-tabs .active {
  padding: 2px 4px 0;
  color: #3f77a3;
  background: #f0f0f0;
  border: solid #5b86ad;
  border-width: 0 1px;
}

.props-box {
  flex: 1;
  border: 1px solid #9a9a9a;
}

.documents {
  display: flex;
  flex-direction: column;
  flex: 1;
  min-width: 0;
  padding: 5px 0 0 3px;
}

.viewport {
  position: relative;
  flex: 1;
  margin: 0 3px 4px;
  padding: 9px 12px;
  border: 2px solid #bab5a0;
}

.hint {
  margin: 0 0 10px;
  font-size: 14px;
  line-height: 18px;
  color: #666;
}

.guide-row {
  display: flex;
  align-items: flex-start;
  gap: 8px;
  height: 70px;
  padding-left: 2px;
}

.guide {
  display: flex;
  align-items: center;
  justify-content: center;
  box-sizing: border-box;
  width: 35px;
  height: 35px;
  border: 1px solid #858585;
  border-radius: 5px;
  background: #fff;
}

.guide svg {
  width: 20px;
  height: 27px;
}

.guide.large {
  width: 53px;
  height: 53px;
  border: 2px solid #929292;
  border-radius: 8px;
}

.guide.large svg {
  width: 32px;
  height: 43px;
}

.guide.complete {
  border-color: #d8d8d8;
}

.guide.complete svg {
  width: 28px;
  height: 28px;
}

.brand {
  position: absolute;
  top: 20px;
  right: 12px;
  width: 130px;
  height: 80px;
  font-family: "Open Sans", "Noto Sans", sans-serif;
  font-weight: 700;
  fill: #4c4c4c;
}

.brand-name {
  font-size: 40px;
}

.brand-release {
  font-size: 20px;
}

.model {
  position: absolute;
  left: 278px;
  top: 305px;
  width: 440px;
  height: 350px;
}

.compass {
  position: absolute;
  left: 48px;
  bottom: 43px;
  width: 60px;
  height: 80px;
}

.model text,
.compass text {
  font-family: "Open Sans", sans-serif;
  font-size: 33px;
  font-weight: 700;
  text-anchor: middle;
}

.doc-tabs {
  display: flex;
  height: 27px;
  border: solid #7d7d7d;
  border-width: 1px 0 0 1px;
  background: #f5f5fa;
}

.doc-tab,
.doc-tab button {
  display: flex;
  align-items: center;
  gap: 2px;
  height: 24px;
}

.doc-tab {
  padding: 0 18px 0 8px;
}

.doc-tab svg {
  width: 18px;
  height: 18px;
}

.doc-tab.active {
  box-sizing: border-box;
  padding: 0 3px;
  font-weight: 700;
  color: #2d5c86;
  background: #f0f0f0;
  border: solid #2d5c86;
  border-width: 0 1px 1px;
}

.doc-tab .close svg,
.doc-nav svg {
  width: 10px;
  height: 10px;
}

.doc-nav {
  display: flex;
  align-items: center;
  gap: 6px;
  height: 22px;
  margin-left: auto;
  padding-right: 3px;
}

/* status bar */
.status-bar {
  display: flex;
  height: 31px;
  color: #fff;
  background: #2d5c86;
}

.status-msg {
  flex: 1;
  padding: 5px 9px 0;
  align-self: center;
}

.cell {
  display: flex;
  align-items: center;
  box-sizing: border-box;
  margin-top: 5px;
  border-left: 1px solid #7f9db8;
}

.medium {
  width: 128px;
}

.info {
  justify-content: center;
  gap: 5px;
  width: 39px;
}

.cell svg {
  width: 18px;
  height: 18px;
}

.cell button {
  display: flex;
  align-items: center;
  gap: 6px;
}

.tools {
  justify-content: flex-end;
  gap: 8px;
  width: 314px;
  padding-right: 5px;
}

.tools.view {
  justify-content: flex-start;
  gap: 8px;
  width: 178px;
  padding-left: 5px;
}

.spinner {
  display: flex;
  flex-direction: column;
  gap: 8px;
}

.spinner .caret {
  border-left-width: 5px;
  border-right-width: 5px;
}

.spinner .up {
  border-bottom-width: 5px;
}

.spinner .down {
  border-top-width: 5px;
}
</style>
